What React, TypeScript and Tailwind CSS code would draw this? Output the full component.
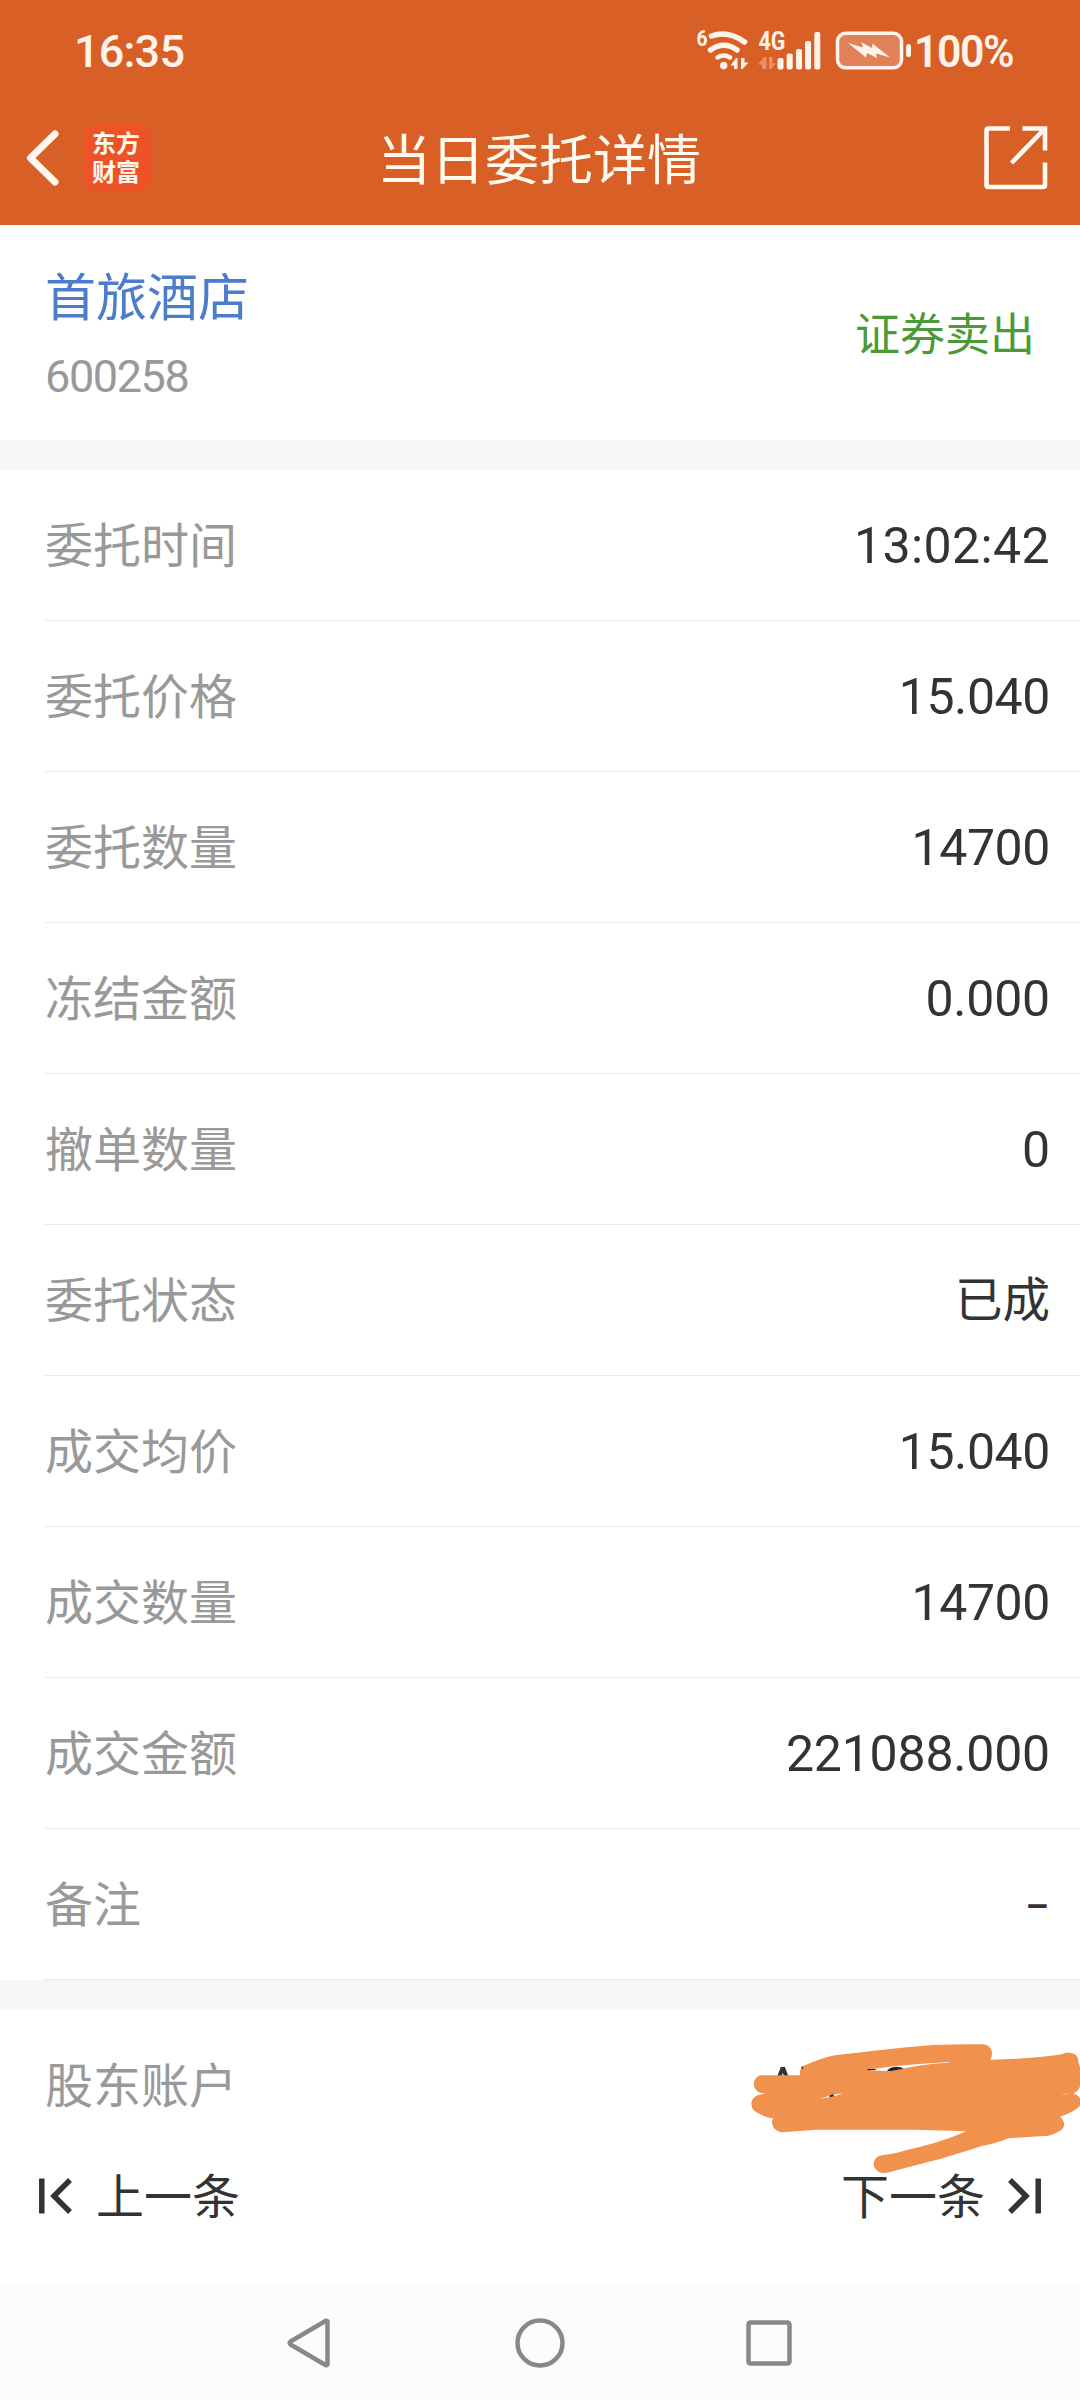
import React from "react";

const rows = [
  { label: "委托时间", value: "13:02:42", style: "text-[50px] tracking-[0.4px]" },
  { label: "委托价格", value: "15.040", style: "text-[50px] tracking-[-0.4px]" },
  { label: "委托数量", value: "14700", style: "text-[50px] tracking-[-0.4px]" },
  { label: "冻结金额", value: "0.000", style: "text-[50px] tracking-[-0.2px]" },
  { label: "撤单数量", value: "0", style: "text-[50px]" },
  { label: "委托状态", value: "已成", style: "text-[47.5px] pt-[1px]" },
  { label: "成交均价", value: "15.040", style: "text-[50px] tracking-[-0.4px]" },
  { label: "成交数量", value: "14700", style: "text-[50px] tracking-[-0.4px]" },
  { label: "成交金额", value: "221088.000", style: "text-[50px] tracking-[-0.2px]" },
  { label: "备注", value: "–", style: "text-[50px] origin-right scale-x-75 pt-[3px]" },
];

function StatusIcons() {
  return (
    <svg width="230" height="50" viewBox="686 25 230 50" fill="none">
      <text x="696.500" y="46" fontSize="22" fontWeight="700" fill="#fff3ea" textLength="11" lengthAdjust="spacingAndGlyphs">6</text>
      <g stroke="#fff3ea" strokeWidth="5.500" strokeLinecap="round">
        <path d="M711.500 36Q728 30 744.500 42" />
        <path d="M710.500 50Q724 40.500 737 50" />
        <path d="M717.500 57.500Q723.500 53.500 730 57.500" strokeWidth="4.500" />
      </g>
      <circle cx="723.700" cy="65.500" r="3.700" fill="#fff3ea" />
      <path d="M737.500 58V69H734V65.500H730.500L736 58ZM741 58V69H742.500L748.500 62.500H744.500V58Z" fill="#fff3ea" />
      <text x="758.500" y="50" fontSize="26" fontWeight="700" fill="#fff3ea" textLength="27" lengthAdjust="spacingAndGlyphs">4G</text>
      <path d="M766.500 57V69H762V64.500H758L764 57ZM769 57V69H771L776 63.500H772.500V57Z" fill="#ec8f66" />
      <g fill="#fff3ea">
        <rect x="777.500" y="58" width="6" height="11.500" rx="2" />
        <rect x="786.700" y="53.500" width="6" height="16" rx="2" />
        <rect x="796" y="49" width="6" height="20.500" rx="2" />
        <rect x="805" y="41" width="6" height="28.500" rx="2" />
        <rect x="814.300" y="32" width="6" height="37.500" rx="2" />
      </g>
      <rect x="837.500" y="33.300" width="64" height="34.500" rx="8" fill="#e08157" stroke="#fff3ea" strokeWidth="3.500" />
      <path d="M848 43L863 47.500L861.500 42.300L872 48L872.500 43.500L890 57.500L876 53.500L877 58L867 53L866 57.500Z" fill="#fff3ea" />
      <rect x="906" y="44" width="5" height="13" rx="2.500" fill="#fff3ea" />
    </svg>
  );
}

// Marker strokes that hide the account number.
function Scribble() {
  return (
    <svg className="absolute right-0 top-[-50px]" width="360" height="280" viewBox="0 0 1080 840">
      <path
        fill="#f0924e"
        d="M125 346H240Q238 325 250 318Q300 295 345 286Q480 270 560 262L640 255Q710 252 790 253Q815 257 816 280Q815 295 810 299Q900 297 950 292Q1000 288 1025 283Q1045 272 1065 283Q1076 292 1075 306L1080 320V378Q1078 392 1060 401Q1075 404 1080 415V437Q1070 452 1020 470Q1034 482 1032 498Q1028 515 985 527L865 535Q830 550 785 558Q740 573 660 597Q600 612 510 636Q490 642 475 635Q460 625 461 608Q465 590 485 586Q520 583 560 570Q600 562 640 550Q700 532 738 514L590 509H290L185 517Q160 513 156 490Q155 480 160 476Q120 467 100 450Q88 430 100 415Q112 403 138 401Q105 400 101 374Q103 348 125 346Z"
      />
      <g fill="#ffffff">
        <path d="M465 326Q560 312 690 306Q690 309 640 311Q570 320 515 333Q480 333 440 330Z" />
        <path d="M298 416Q330 405 365 400Q365 404 330 411Q310 415 298 416Z" />
        <path d="M1025 402Q1035 404 1045 401Z" />
      </g>
      <g fill="#2e2018">
        <path d="M443 327H467V330L441 331Z" />
        <path d="M501 333Q508 321 527 320Q545 320 550 326L515 333Z" />
        <path d="M330 406L340 403L342 409L328 412Z" />
        <path d="M244 321L250 318L247 330Z" />
      </g>
    </svg>
  );
}

export default function App() {
  return (
    <div className="flex h-[2400px] w-[1080px] flex-col overflow-hidden bg-white font-[Roboto,'Noto_Sans_CJK_SC',sans-serif] text-[#333333]">
      <header className="h-[225px] shrink-0 bg-[#d86027] text-[#fff9f0]">
        <div className="flex h-[100px] items-center pl-[74px] pr-[66px] text-[#fff3ea]">
          <span className="mt-[3px] text-[45px] font-medium leading-none tracking-[-0.8px]">16:35</span>
          <div className="ml-auto flex items-center">
            <StatusIcons />
            <span className="ml-[-2px] mt-[3px] w-[100px] origin-left scale-x-[0.95] whitespace-nowrap text-[45px] font-semibold leading-none tracking-[-1.5px]">100%</span>
          </div>
        </div>
        <div className="grid h-[115px] grid-cols-[1fr_auto_1fr] items-center pl-[26px] pr-[32px]">
          <div className="flex items-center">
            <svg width="34" height="56" viewBox="0 0 34 56" fill="none" stroke="#fff9f0" strokeWidth="7" strokeLinecap="round" strokeLinejoin="round">
              <path d="M29 4L4.500 28L29 52" />
            </svg>
            <div className="ml-[24px] flex h-[68px] w-[67px] items-center justify-center rounded-[13px] bg-[#ee5328]">
              <span className="mb-[4px] mr-[2px] w-[49px] break-all font-['Noto_Sans_CJK_SC',sans-serif] text-[24px] font-bold leading-[29px]">东方财富</span>
            </div>
          </div>
          <h1 className="ml-[4px] mt-[8px] text-[54px] leading-none">当日委托详情</h1>
          <svg className="justify-self-end" width="64" height="64" viewBox="0 0 64 64" fill="none" stroke="#fff9f0" strokeWidth="4.600">
            <path d="M26 2.500H4.500Q2.500 2.500 2.500 4.500V59Q2.500 61 4.500 61H59Q61 61 61 59V36.500M38.500 2.500H61V24.500M61 2.500L27.500 37" />
          </svg>
        </div>
      </header>

      <section className="flex h-[215px] shrink-0 items-center justify-between px-[45px] pt-[5px]">
        <div className="flex flex-col">
          <span className="text-[51px] leading-[60px] text-[#4b7dcb]">首旅酒店</span>
          <span className="mt-[23px] text-[45px] leading-[50px] tracking-[-1.4px] text-[#999999]">600258</span>
        </div>
        <span className="text-[45px] leading-none text-[#4a9a35]">证券卖出</span>
      </section>

      <div className="h-[30px] shrink-0 bg-[#f6f7f9]" />

      <section className="shrink-0">
        {rows.map(({ label, value, style }) => (
          <div key={label} className="pl-[45px]">
            <div className="flex h-[151px] items-center justify-between border-b border-[#ebebeb] pr-[30px] pt-[2px]">
              <span className="pt-[1px] text-[48px] leading-none text-[#999999]">{label}</span>
              <span className={`leading-none ${style}`}>{value}</span>
            </div>
          </div>
        ))}
      </section>

      <div className="h-[30px] shrink-0 bg-[#f6f7f9]" />

      <section className="relative flex h-[150px] shrink-0 items-center justify-between pl-[45px] pr-[281px] pt-[2px]">
        <span className="pt-[1px] text-[48px] leading-none text-[#999999]">股东账户</span>
        <span className="text-[50px] leading-none">A</span>
        <Scribble />
      </section>

      <div className="mb-[56px] flex h-[70px] shrink-0 items-center justify-between px-[39px] pt-[2px] text-[48px] leading-none">
        <div className="flex items-center gap-[23px]">
          <svg width="34" height="36" viewBox="0 0 34 36" fill="none" stroke="#333333" strokeWidth="5.500">
            <path d="M2.800 0.500V35.500M31 2L15 18L31 34" />
          </svg>
          <span className="pt-[4px]">上一条</span>
        </div>
        <div className="flex items-center gap-[22px]">
          <span className="pt-[4px]">下一条</span>
          <svg width="34" height="36" viewBox="0 0 34 36" fill="none" stroke="#333333" strokeWidth="5.500">
            <path d="M31.200 0.500V35.500M3 2L19 18L3 34" />
          </svg>
        </div>
      </div>

      <nav className="flex grow items-center bg-[#fcfcfc] pl-[287px]">
        <svg width="44" height="50" viewBox="0 0 44 50" fill="none" stroke="#888888" strokeWidth="4.500" strokeLinejoin="round">
          <path d="M40.500 3.500V46.500Q40 47.500 38.500 47L3.500 26.500Q2 25 3.500 23.500L38.500 3Q40 2.500 40.500 3.500Z" />
        </svg>
        <svg className="ml-[184px]" width="50" height="50" viewBox="0 0 50 50" fill="none" stroke="#888888" strokeWidth="4.500">
          <circle cx="25" cy="25" r="22.500" />
        </svg>
        <svg className="ml-[181px]" width="46" height="46" viewBox="0 0 46 46" fill="none" stroke="#888888" strokeWidth="4.500">
          <rect x="2.500" y="2.500" width="41" height="41" rx="2" />
        </svg>
      </nav>
    </div>
  );
}
